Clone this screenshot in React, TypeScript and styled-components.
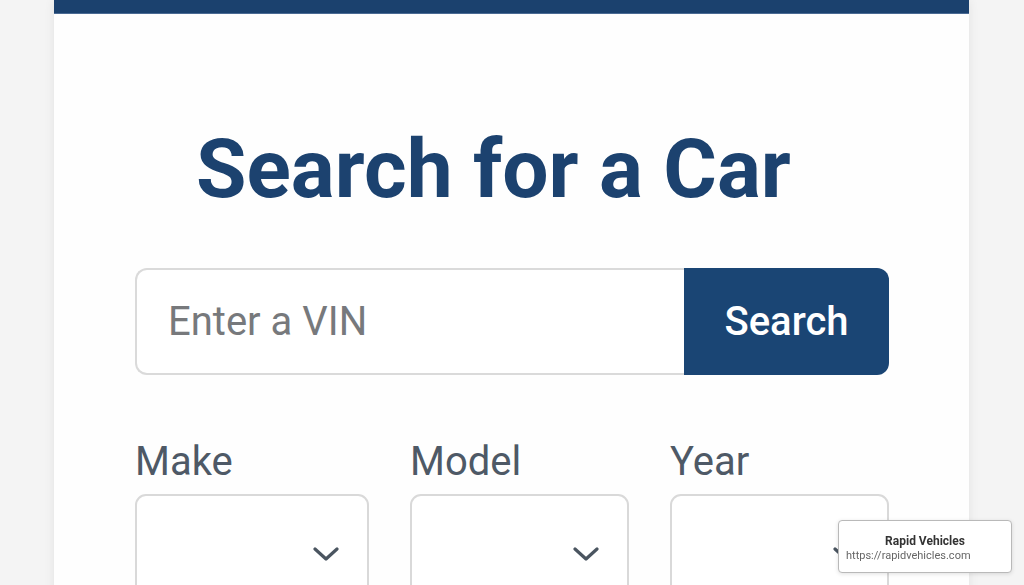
import React from 'react'
import styled, { createGlobalStyle } from 'styled-components'

const GlobalStyle = createGlobalStyle`
  html, body {
    margin: 0;
    padding: 0;
    background: #f4f4f4;
    font-family: Roboto, "Liberation Sans", Arial, sans-serif;
    overflow: hidden;
  }
`

const Page = styled.div`
  width: 1024px;
  height: 585px;
  overflow: hidden;
  display: flex;
  justify-content: flex-start;
  padding-left: 54px;
  box-sizing: border-box;
`

const Card = styled.div`
  width: 915px;
  height: 640px;
  background: #fefefe;
  box-shadow: 0 0 10px rgba(0, 0, 0, 0.08);
  display: flex;
  flex-direction: column;
`

const TopBar = styled.div`
  height: 13px;
  background: #1b416e;
  border-bottom: 1px solid #4a6a93;
`

const Body = styled.div`
  padding: 106px 80px 0 81px;
  display: flex;
  flex-direction: column;
`

const Title = styled.h1`
  margin: 0 0 50px 0;
  padding-left: 61px;
  font-size: 82px;
  line-height: 98px;
  font-weight: 700;
  color: #1c426f;
`

const SearchRow = styled.div`
  display: flex;
  height: 107px;
`

const VinInput = styled.input`
  flex: 1;
  min-width: 0;
  box-sizing: border-box;
  height: 100%;
  border: 2px solid #dadada;
  border-right: none;
  border-radius: 12px 0 0 12px;
  padding: 0 0 0 31px;
  font-family: Roboto, "Liberation Sans", Arial, sans-serif;
  font-size: 40px;
  color: #333;
  background: #fff;
  outline: none;

  &::placeholder {
    color: #77797c;
  }
`

const SearchButton = styled.button`
  width: 205px;
  height: 100%;
  border: none;
  border-radius: 0 12px 12px 0;
  background: #1a4574;
  color: #fff;
  font-family: Roboto, "Liberation Sans", Arial, sans-serif;
  font-size: 40px;
  font-weight: 500;
  cursor: pointer;
`

const Filters = styled.div`
  margin-top: 63px;
  display: grid;
  grid-template-columns: 234px 219px 219px;
  column-gap: 41px;
`

const Field = styled.div`
  display: flex;
  flex-direction: column;
`

const Label = styled.label`
  font-size: 40px;
  line-height: 47px;
  font-weight: 400;
  color: #4e5966;
  margin-bottom: 9px;
`

const SelectBox = styled.div`
  position: relative;
  height: 120px;
  border: 2px solid #d9d9d9;
  border-radius: 11px;
  background: #fff;
  box-sizing: border-box;
`

const Chevron = styled.svg`
  position: absolute;
  right: 28px;
  top: 51px;
  width: 26px;
  height: 15px;
`

const Tooltip = styled.div`
  position: fixed;
  left: 838px;
  top: 520px;
  width: 174px;
  height: 53px;
  box-sizing: border-box;
  background: #fff;
  border: 1px solid #b9b9b9;
  border-radius: 4px;
  box-shadow: 0 1px 4px rgba(0, 0, 0, 0.12);
  padding: 13px 7px 0 7px;
  display: flex;
  flex-direction: column;
`

const TipTitle = styled.div`
  font-size: 12px;
  font-weight: 700;
  color: #333;
  text-align: center;
  line-height: 15px;
`

const TipUrl = styled.div`
  font-size: 11px;
  color: #666;
  line-height: 14px;
`

const fields = ['Make', 'Model', 'Year']

export default function App() {
  return (
    <>
      <GlobalStyle />
      <Page>
        <Card>
          <TopBar />
          <Body>
            <Title>Search for a Car</Title>
            <SearchRow>
              <VinInput placeholder="Enter a VIN" />
              <SearchButton>Search</SearchButton>
            </SearchRow>
            <Filters>
              {fields.map((f) => (
                <Field key={f}>
                  <Label>{f}</Label>
                  <SelectBox>
                    <Chevron viewBox="0 0 26 15">
                      <path
                        d="M2 2 L13 12 L24 2"
                        fill="none"
                        stroke="#4a5560"
                        strokeWidth="3.2"
                        strokeLinecap="round"
                        strokeLinejoin="round"
                      />
                    </Chevron>
                  </SelectBox>
                </Field>
              ))}
            </Filters>
          </Body>
        </Card>
      </Page>
      <Tooltip>
        <TipTitle>Rapid Vehicles</TipTitle>
        <TipUrl>https://rapidvehicles.com</TipUrl>
      </Tooltip>
    </>
  )
}
